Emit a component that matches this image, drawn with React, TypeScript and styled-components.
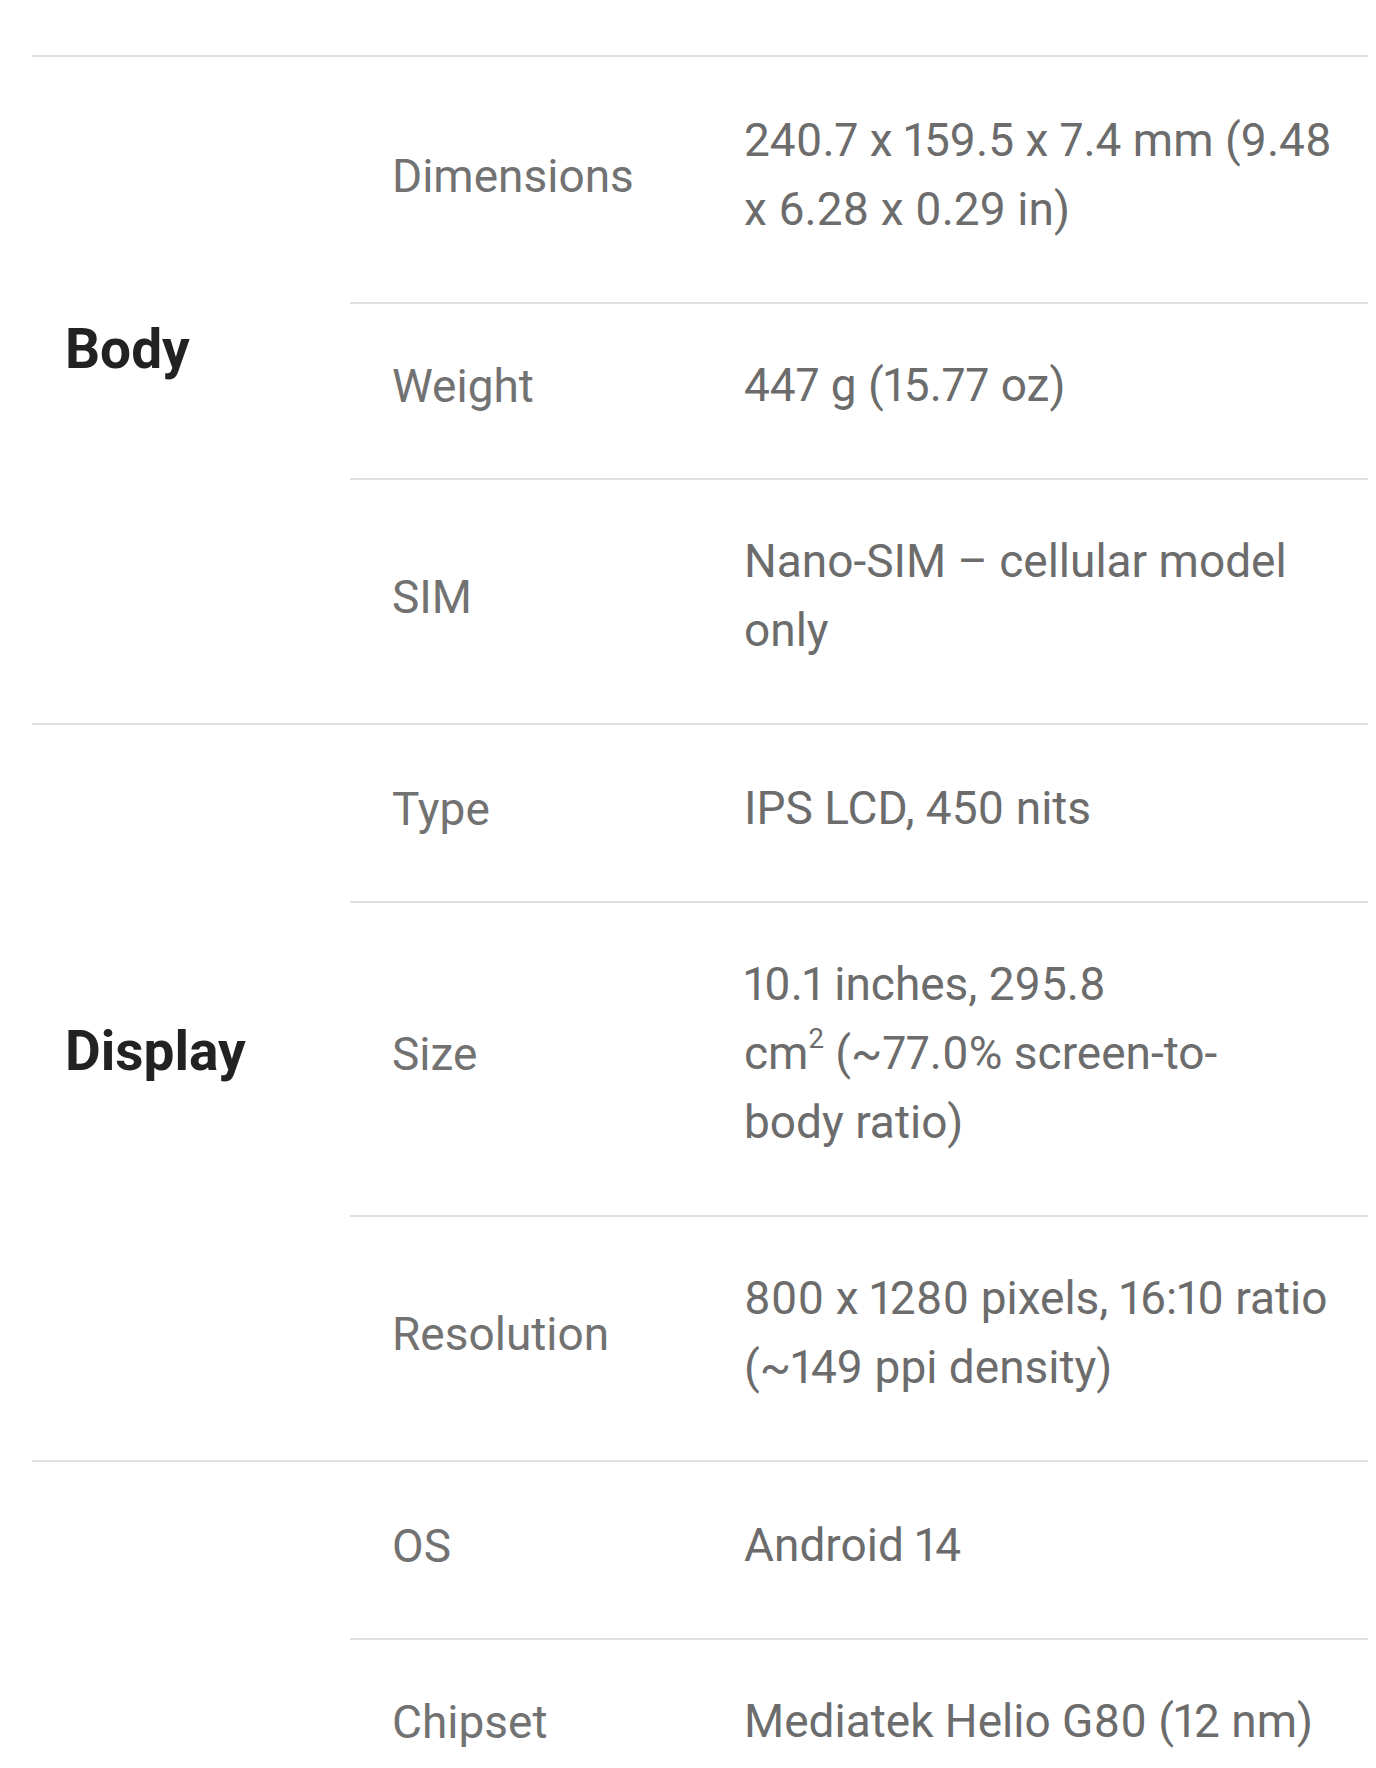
import React from "react";
import styled, { createGlobalStyle } from "styled-components";

const Global = createGlobalStyle`
  html, body {
    margin: 0;
    padding: 0;
    background: #ffffff;
  }
  body {
    font-family: Roboto, "Noto Sans", "Liberation Sans", sans-serif;
    font-variant-numeric: proportional-nums;
  }
  sup {
    font-size: 0.6em;
    line-height: 0;
    vertical-align: 0.75em;
  }
`;

const Page = styled.main`
  padding: 55px 8px 0 32px;
`;

const SpecTable = styled.div`
  display: flex;
  flex-direction: column;
`;

const Section = styled.section`
  display: flex;
  border-top: 2px solid #e0e0e0;
`;

const Category = styled.h2`
  margin: 0;
  width: 318px;
  flex: 0 0 318px;
  box-sizing: border-box;
  padding: 0 0 82px 33px;
  display: flex;
  align-items: center;
  font-size: 55px;
  line-height: 69px;
  font-weight: 700;
  color: #222222;
`;

const Rows = styled.div`
  flex: 1;
  display: flex;
  flex-direction: column;
`;

const Row = styled.div<{ $first?: boolean }>`
  display: flex;
  border-top: ${(p) => (p.$first ? "none" : "2px solid #e0e0e0")};
  padding-top: ${(p) => (p.$first ? "2px" : "0")};
`;

const Label = styled.div`
  flex: 0 0 352px;
  box-sizing: border-box;
  padding: 0 0 9px 42px;
  display: flex;
  align-items: center;
  font-size: 46px;
  line-height: 69px;
  color: #727272;
`;

const Value = styled.div`
  flex: 1;
  box-sizing: border-box;
  padding: 47px 10px 58px 42px;
  font-size: 46px;
  line-height: 69px;
  color: #6c6c6c;
`;

const Line = styled.span`
  display: block;
  white-space: nowrap;
`;

type Spec = { label: string; lines: React.ReactNode[] };
type Group = { name: string; specs: Spec[] };

const groups: Group[] = [
  {
    name: "Body",
    specs: [
      { label: "Dimensions", lines: ["240.7 x 159.5 x 7.4 mm (9.48", "x 6.28 x 0.29 in)"] },
      { label: "Weight", lines: ["447 g (15.77 oz)"] },
      { label: "SIM", lines: ["Nano-SIM – cellular model", "only"] },
    ],
  },
  {
    name: "Display",
    specs: [
      { label: "Type", lines: ["IPS LCD, 450 nits"] },
      {
        label: "Size",
        lines: [
          "10.1 inches, 295.8",
          <>
            cm<sup>2</sup> (~77.0% screen-to-
          </>,
          "body ratio)",
        ],
      },
      { label: "Resolution", lines: ["800 x 1280 pixels, 16:10 ratio", "(~149 ppi density)"] },
    ],
  },
  {
    name: "Platform",
    specs: [
      { label: "OS", lines: ["Android 14"] },
      { label: "Chipset", lines: ["Mediatek Helio G80 (12 nm)"] },
    ],
  },
];

export default function App() {
  return (
    <>
      <Global />
      <Page>
        <SpecTable>
          {groups.map((g, gi) => (
            <Section key={g.name}>
              <Category>{gi < 2 ? g.name : ""}</Category>
              <Rows>
                {g.specs.map((s, i) => (
                  <Row key={s.label} $first={i === 0}>
                    <Label>{s.label}</Label>
                    <Value>
                      {s.lines.map((l, li) => (
                        <Line key={li}>{l}</Line>
                      ))}
                    </Value>
                  </Row>
                ))}
              </Rows>
            </Section>
          ))}
        </SpecTable>
      </Page>
    </>
  );
}
